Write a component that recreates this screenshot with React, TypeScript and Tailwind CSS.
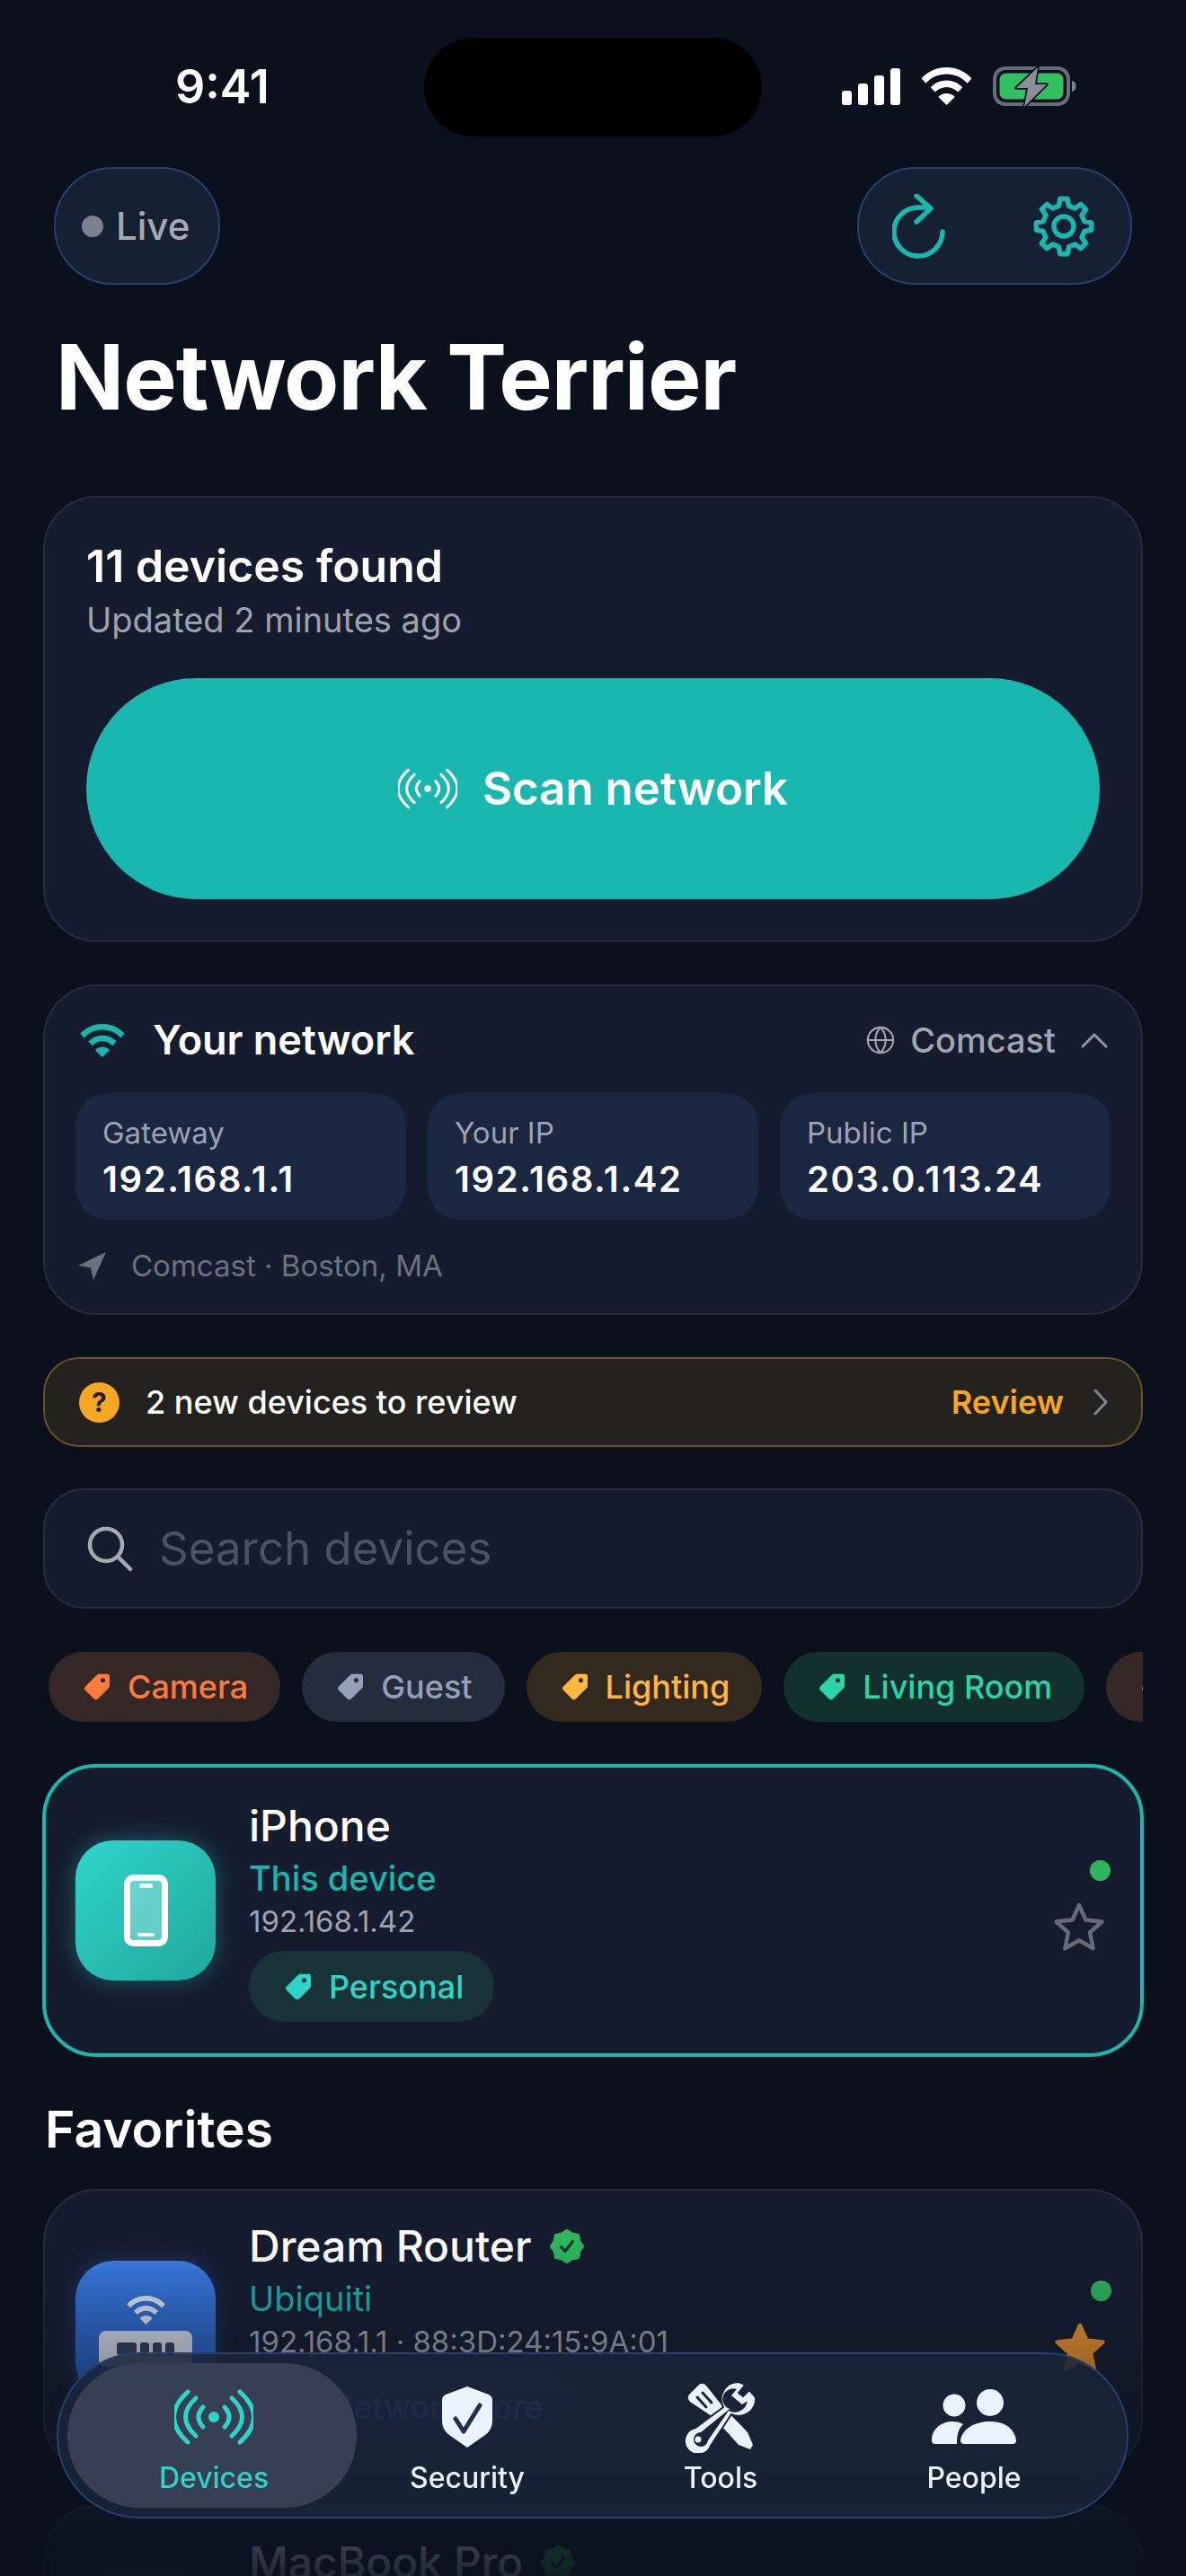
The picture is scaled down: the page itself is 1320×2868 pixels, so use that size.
import React from "react";
import { Globe } from "lucide-react";

function gearPath(cx: number, cy: number) {
  const pts: string[] = [];
  const teeth = 8;
  const R = 31;
  const r = 23.5;
  for (let i = 0; i < teeth; i++) {
    const a = (i / teeth) * Math.PI * 2 - Math.PI / 2;
    const w = (Math.PI * 2) / teeth;
    const list: [number, number][] = [
      [r, a - w * 0.3],
      [R, a - w * 0.17],
      [R, a + w * 0.17],
      [r, a + w * 0.3],
    ];
    list.forEach(([rad, an]) => pts.push(`${(cx + rad * Math.cos(an)).toFixed(1)} ${(cy + rad * Math.sin(an)).toFixed(1)}`));
  }
  return "M" + pts.join(" L") + " Z";
}

function Tag({ color, size = 36 }: { color: string; size?: number }) {
  return (
    <svg width={size} height={size} viewBox="0 0 24 24" className="shrink-0">
      <path
        fill={color}
        fillRule="evenodd"
        d="M13 2.5h7.5a1.5 1.5 0 0 1 1.5 1.5v7.5a2 2 0 0 1-.6 1.4l-8 8a2.2 2.2 0 0 1-3.1 0l-6.2-6.2a2.2 2.2 0 0 1 0-3.1l8-8a2 2 0 0 1 1.4-.6Zm4 3a1.7 1.7 0 1 0 0 3.4 1.7 1.7 0 0 0 0-3.4Z"
      />
    </svg>
  );
}

function WifiGlyph({ color, w = 57, h = 42, dark = false }: { color: string; w?: number; h?: number; dark?: boolean }) {
  return (
    <svg width={w} height={h} viewBox="0 0 57 42" className="shrink-0">
      <path fill={color} d="M28.5 0C17.5 0 8 4.4.5 12.3l5 5.4C11.5 11 19.5 7.5 28.5 7.5S45.5 11 51.5 17.7l5-5.4C49 4.4 39.5 0 28.5 0Z" />
      <path fill={color} d="M28.5 14.5c-7 0-13 2.8-17.7 7.7l5 5.4c3.3-3.6 7.8-5.7 12.7-5.7s9.4 2.1 12.7 5.7l5-5.4c-4.700-4.900-10.700-7.700-17.700-7.700Z" />
      <path fill={color} d="M28.500 29c-3.500 0-6.800 1.400-9.200 3.900l9.200 9.100 9.200-9.100C35.300 30.400 32 29 28.500 29Z" />
    </svg>
  );
}

function Radio({ color, w, h, sw, dot }: { color: string; w: number; h: number; sw: number; dot: number }) {
  return (
    <svg width={w} height={h} viewBox="0 0 88 62" fill="none" stroke={color} strokeWidth={sw} strokeLinecap="round" className="shrink-0">
      <circle cx="44" cy="31" r={dot} fill={color} stroke="none" />
      <path d="M56 20Q66 31 56 42" />
      <path d="M64 10Q87 31 64 52" />
      <path d="M73 3Q104 31 73 59" />
      <path d="M32 20Q22 31 32 42" />
      <path d="M24 10Q1 31 24 52" />
      <path d="M15 3Q-16 31 15 59" />
    </svg>
  );
}

function Star({ filled }: { filled: boolean }) {
  return (
    <svg width="58" height="56" viewBox="0 0 58 56" className="shrink-0">
      <path
        d="M29 4l7.400 16.600 18 1.900-13.400 12.100 3.700 17.700L29 43.300 13.300 52.300 17 34.600 3.600 22.500l18-1.900Z"
        fill={filled ? "#f0932b" : "none"}
        stroke={filled ? "#f0932b" : "#656b79"}
        strokeWidth="4.500"
        strokeLinejoin="round"
      />
    </svg>
  );
}

function Badge({ size = 38, color = "#2fb65d" }: { size?: number; color?: string }) {
  const pts: string[] = [];
  for (let i = 0; i < 16; i++) {
    const a = (i / 16) * Math.PI * 2;
    const r = i % 2 === 0 ? 19 : 16;
    pts.push(`${(19 + r * Math.cos(a)).toFixed(1)},${(19 + r * Math.sin(a)).toFixed(1)}`);
  }
  return (
    <svg width={size} height={size} viewBox="0 0 38 38" className="shrink-0">
      <polygon points={pts.join(" ")} fill={color} strokeLinejoin="round" stroke={color} strokeWidth="1" />
      <path d="M12.500 19.500l4.500 5 8.500-11" fill="none" stroke="#10301f" strokeWidth="3" strokeLinecap="round" strokeLinejoin="round" />
    </svg>
  );
}

function Chip({ label, bg, color, iconColor }: { label: string; bg: string; color: string; iconColor?: string }) {
  return null;
}

function FilterChip({ label, className, color }: { label: string; className: string; color: string }) {
  return (
    <div className={`flex h-[78px] shrink-0 items-center gap-[17px] rounded-full pl-[35px] pr-[36px] text-[36px] font-medium ${className}`}>
      <Tag color={color} />
      <span>{label}</span>
    </div>
  );
}

function DeviceCard({
  name,
  sub,
  meta,
  tile,
  chip,
  chipClass,
  chipColor,
  filled,
  verified,
  highlight,
}: {
  name: string;
  sub: string;
  meta: string;
  tile: React.ReactNode;
  chip: string;
  chipClass: string;
  chipColor: string;
  filled: boolean;
  verified?: boolean;
  highlight?: boolean;
}) {
  return (
    <div
      className={`flex items-center rounded-[60px] bg-[#151c2e] ${
        highlight ? "-mx-[1px] h-[326px] border-[4px] border-[#1ab7ae] pl-[33px] pr-[33px]" : "h-[316px] border-2 border-[#252d3d] pl-[34px] pr-[33px]"
      }`}
    >
      {tile}
      <div className="ml-[37px] flex min-w-0 flex-1 flex-col">
        <div className="flex items-center gap-[20px]">
          <span className="text-[48px] leading-[60px] font-medium text-white">{name}</span>
          {verified && <Badge />}
        </div>
        <span className={`mt-[3px] text-[38px] leading-[50px] text-[#1ab7ae] ${highlight ? "font-medium" : "font-normal"}`}>{sub}</span>
        <span className="text-[33px] leading-[46px] text-[#9ca3af]">{meta}</span>
        <div className={`mt-[10px] flex h-[79px] w-fit items-center gap-[17px] rounded-full pl-[36px] pr-[34px] text-[36px] font-medium ${chipClass}`}>
          <Tag color={chipColor} />
          <span>{chip}</span>
        </div>
      </div>
      <div className="flex flex-col items-end gap-[23px] self-center pb-[10px]">
        <div className="h-[23px] w-[23px] rounded-full bg-[#2fb65d]" />
        <div className="mr-[6px]">
          <Star filled={filled} />
        </div>
      </div>
    </div>
  );
}

function PhoneTile() {
  return (
    <div className="flex h-[156px] w-[156px] shrink-0 items-center justify-center rounded-[42px] bg-gradient-to-br from-[#2fd6ca] to-[#21a79e] shadow-[0_0_24px_rgba(45,212,200,0.35)]">
      <svg width="49" height="80" viewBox="0 0 49 80">
        <rect x="3.500" y="3.500" width="42" height="73" rx="7" fill="#ffffff" fillOpacity="0.28" stroke="#ffffff" strokeWidth="7" />
        <rect x="17" y="10" width="15" height="5" rx="2" fill="#ffffff" />
        <rect x="15" y="65" width="19" height="4" rx="2" fill="#ffffff" />
      </svg>
    </div>
  );
}

function RouterTile() {
  return (
    <div className="flex h-[156px] w-[156px] shrink-0 flex-col items-center justify-center gap-[7px] rounded-[42px] bg-gradient-to-b from-[#3a7de6] to-[#2457b0] shadow-[0_0_24px_rgba(59,125,230,0.3)]">
      <WifiGlyph color="#dfe7f3" w={47} h={32} />
      <div className="flex h-[40px] w-[104px] items-center justify-center gap-[4px] rounded-[8px] bg-[#d5dbe6]">
        <div className="h-[14px] w-[22px] rounded-[3px] bg-[#33415c]" />
        <div className="h-[14px] w-[10px] rounded-[3px] bg-[#33415c]" />
        <div className="h-[14px] w-[10px] rounded-[3px] bg-[#33415c]" />
        <div className="h-[14px] w-[10px] rounded-[3px] bg-[#33415c]" />
      </div>
    </div>
  );
}

function Stat({ label, value }: { label: string; value: string }) {
  return (
    <div className="flex h-[141px] flex-col justify-center rounded-[36px] bg-[#1b2740] pl-[30px]">
      <span className="text-[33px] leading-[44px] text-[#9ca3af]">{label}</span>
      <span className="mt-[6px] text-[40px] leading-[48px] font-semibold tracking-[0.04em] text-white">{value}</span>
    </div>
  );
}

function ToolsIcon() {
  return (
    <svg width="80" height="80" viewBox="0 0 80 80" fill="none">
      <path d="M5 15 L16 4 Q20 1 24 5 L43 29 L70 57 L76 71 L73 76 L60 71 L33 41 L6 23 Q2 19 5 15Z" fill="#eaf3fd" />
      <path d="M14 18 L24 29 M20 13 L30 24" stroke="#1a2438" strokeWidth="3" strokeLinecap="round" />
      <path
        d="M58 1 A19 19 0 0 0 43 29 L12 52 A15 15 0 1 0 29 72 L52 37 A19 19 0 0 0 79 18 L72 10 L65 17 L60 13 L67 5 Q64 1 58 1Z"
        fill="#eaf3fd"
        stroke="#1a2438"
        strokeWidth="2"
      />
      <path d="M58 9 A11 11 0 0 0 50 31 L18 57 A8 8 0 1 0 26 66 L49 33 Q60 38 68 28 L70 22 L64 26 L52 16 Z" fill="#1a2438" />
      <circle cx="15" cy="65" r="3.500" fill="#eaf3fd" />
    </svg>
  );
}

function NavItem({ label, active, icon }: { label: string; active?: boolean; icon: React.ReactNode }) {
  return (
    <div className="relative flex w-[282px] flex-col items-center">
      <div className="flex h-[80px] items-center justify-center">{icon}</div>
      <span className={`mt-[8px] text-[32px] leading-[40px] font-medium ${active ? "text-[#2dd4c8]" : "text-[#eaf3fd]"}`}>{label}</span>
    </div>
  );
}

export default function App() {
  return (
    <div className="relative h-[2868px] w-[1320px] overflow-hidden bg-[#0a111d] font-['Inter',sans-serif] text-white">
      {/* island */}
      <div className="absolute left-[472px] top-[42px] h-[110px] w-[376px] rounded-[55px] bg-black" />

      {/* status bar */}
      <div className="flex h-[186px] items-start justify-between pt-[70px] pl-[195px] pr-[122px]">
        <span className="text-[52px] leading-[54px] font-semibold">9:41</span>
        <div className="flex items-start gap-[23px] pt-[5px]">
          <svg width="65" height="41" viewBox="0 0 65 41" className="mt-[1px]">
            <rect x="0" y="25" width="11" height="16" rx="3" fill="#fff" />
            <rect x="18" y="17" width="11" height="24" rx="3" fill="#fff" />
            <rect x="36" y="8" width="11" height="33" rx="3" fill="#fff" />
            <rect x="54" y="0" width="11" height="41" rx="3" fill="#fff" />
          </svg>
          <WifiGlyph color="#ffffff" />
          <svg width="93" height="46" viewBox="0 0 93 46" className="-mt-[1px]">
            <rect x="2" y="2" width="82" height="40" rx="12" fill="none" stroke="#686c79" strokeWidth="4" />
            <rect x="7.500" y="7.500" width="71" height="29" rx="7" fill="#33c15f" />
            <path d="M88 16c3 .5 4.500 3 4.500 6s-1.500 5.500-4.500 6Z" fill="#7e818c" />
            <path d="M50 1 L26 24 H39 L35 45 L60 20 H47 Z" fill="#8b8e99" stroke="#0a111d" strokeWidth="3.500" strokeLinejoin="round" paintOrder="stroke" />
          </svg>
        </div>
      </div>

      {/* top controls */}
      <div className="flex items-center justify-between px-[60px]">
        <div className="flex h-[131px] w-[185px] items-center gap-[14px] rounded-[65px] border-2 border-[#27406f] bg-[#162033] pl-[29px]">
          <div className="h-[24px] w-[24px] rounded-full bg-[#7d818d]" />
          <span className="text-[42px] font-medium text-[#a6a9b2]">Live</span>
        </div>
        <div className="flex h-[131px] w-[306px] items-center justify-between rounded-[65px] border-2 border-[#27406f] bg-[#162033] pl-[37px] pr-[38px]">
          <svg width="60" height="72" viewBox="0 0 60 72" fill="none" stroke="#1ab7ae" strokeWidth="5.500" strokeLinecap="round" strokeLinejoin="round">
            <path d="M56 42 A27 27 0 1 1 29 15 L40 15" />
            <path d="M27 2 L43 16 L27 31" />
          </svg>
          <svg width="72" height="72" viewBox="0 0 72 72" fill="none" stroke="#1ab7ae" strokeWidth="5.500" strokeLinejoin="round">
            <path d={gearPath(36, 36)} />
            <circle cx="36" cy="36" r="11" />
          </svg>
        </div>
      </div>

      {/* title */}
      <h1 className="mt-[52px] ml-[62px] text-[100px] leading-[102px] font-bold tracking-[-0.01em] text-white">Network Terrier</h1>

      <div className="mt-[81px] flex flex-col px-[48px]">
        {/* scan card */}
        <div className="rounded-[60px] border-2 border-[#252d3d] bg-[#151c2e] px-[46px] pt-[46px] pb-[46px]">
          <div className="text-[50px] leading-[60px] font-semibold text-white">11 devices found</div>
          <div className="mt-[6px] text-[38px] leading-[48px] text-[#9ca3af]">Updated 2 minutes ago</div>
          <div className="mt-[41px] flex h-[246px] items-center justify-center gap-[28px] rounded-full bg-[#1ab7ae]">
            <Radio color="#ffffff" w={66} h={46} sw={4} dot={5} />
            <span className="text-[51px] font-semibold text-white">Scan network</span>
          </div>
        </div>

        {/* network card */}
        <div className="mt-[47px] h-[368px] rounded-[60px] border-2 border-[#252d3d] bg-[#151c2e] px-[34px] pt-[30px]">
          <div className="flex h-[60px] items-center pl-[4px] pr-[3px]">
            <WifiGlyph color="#1ab7ae" w={52} h={37} />
            <span className="ml-[30px] text-[45px] font-semibold text-white">Your network</span>
            <div className="flex-1" />
            <Globe size={34} color="#a0a5af" strokeWidth={1.5} />
            <span className="ml-[16px] text-[38px] font-medium text-[#a0a5af]">Comcast</span>
            <svg width="30" height="18" viewBox="0 0 30 18" fill="none" stroke="#8f95a0" strokeWidth="3" strokeLinecap="round" strokeLinejoin="round" className="ml-[28px]">
              <path d="M2 16 L15 3 L28 16" />
            </svg>
          </div>
          <div className="mt-[29px] grid grid-cols-3 gap-[24px]">
            <Stat label="Gateway" value="192.168.1.1" />
            <Stat label="Your IP" value="192.168.1.42" />
            <Stat label="Public IP" value="203.0.113.24" />
          </div>
          <div className="mt-[30px] flex items-center pl-[3px]">
            <svg width="31" height="31" viewBox="0 0 31 31">
              <path d="M31 0 L0 15 L14 17.500 L17 31 Z" fill="#6b7280" />
            </svg>
            <span className="ml-[28px] text-[33px] leading-[42px] text-[#6b7280]">Comcast · Boston, MA</span>
          </div>
        </div>

        {/* review banner */}
        <div className="mt-[47px] flex h-[100px] items-center rounded-[40px] border-2 border-[#6a4f27] bg-[#23221f] pl-[38px] pr-[36px]">
          <div className="flex h-[45px] w-[45px] items-center justify-center rounded-full bg-[#f5a623] text-[30px] font-bold text-[#23221f]">?</div>
          <span className="ml-[29px] text-[36px] font-medium text-white">2 new devices to review</span>
          <div className="flex-1" />
          <span className="text-[36px] font-semibold text-[#f5a623]">Review</span>
          <svg width="18" height="30" viewBox="0 0 18 30" fill="none" stroke="#7e8593" strokeWidth="3" strokeLinecap="round" strokeLinejoin="round" className="ml-[32px]">
            <path d="M3 2 L15 15 L3 28" />
          </svg>
        </div>

        {/* search */}
        <div className="mt-[46px] flex h-[134px] items-center rounded-[45px] border-2 border-[#252d3d] bg-[#151c2e] pl-[46px]">
          <svg width="52" height="52" viewBox="0 0 52 52" fill="none" stroke="#a6a9b2" strokeWidth="4.500" strokeLinecap="round">
            <circle cx="22" cy="22" r="18" />
            <path d="M35 35 L49 49" />
          </svg>
          <span className="ml-[29px] text-[51px] text-[#4b5363]">Search devices</span>
        </div>

        {/* chips */}
        <div className="mt-[48px] flex gap-[24px] overflow-hidden pl-[6px]">
          <FilterChip label="Camera" className="bg-[#352824] text-[#ff7a3d]" color="#ff7a3d" />
          <FilterChip label="Guest" className="bg-[#242d3e] text-[#94a0b8]" color="#94a0b8" />
          <FilterChip label="Lighting" className="bg-[#33291f] text-[#ffb83d]" color="#ffb83d" />
          <FilterChip label="Living Room" className="bg-[#12302e] text-[#2dd4a7]" color="#2dd4a7" />
          <FilterChip label="Media" className="bg-[#352824] text-[#ff7a3d]" color="#ff7a3d" />
        </div>

        {/* this device */}
        <div className="mt-[47px]">
          <DeviceCard
            highlight
            name="iPhone"
            sub="This device"
            meta="192.168.1.42"
            tile={<PhoneTile />}
            chip="Personal"
            chipClass="bg-[#173338] text-[#2dd4c8]"
            chipColor="#2dd4c8"
            filled={false}
          />
        </div>

        <h2 className="mt-[48px] ml-[2px] text-[57px] leading-[66px] font-semibold text-white">Favorites</h2>

        <div className="mt-[33px] flex flex-col gap-[36px]">
          <DeviceCard
            verified
            name="Dream Router"
            sub="Ubiquiti"
            meta="192.168.1.1  ·  88:3D:24:15:9A:01"
            tile={<RouterTile />}
            chip="Network Core"
            chipClass="bg-[#1b2c52] text-[#3b82f6]"
            chipColor="#3b82f6"
            filled
          />
          <DeviceCard
            verified
            name="MacBook Pro"
            sub="Apple"
            meta="192.168.1.24"
            tile={<PhoneTile />}
            chip="Personal"
            chipClass="bg-[#173338] text-[#2dd4c8]"
            chipColor="#2dd4c8"
            filled
          />
        </div>
      </div>

      {/* bottom fade */}
      <div className="pointer-events-none absolute inset-x-0 bottom-0 h-[380px] bg-gradient-to-b from-[#0a111d]/0 to-[#0a111d]/90" />

      {/* tab bar */}
      <div className="absolute bottom-[64px] left-[63px] h-[185px] w-[1193px] overflow-hidden rounded-[92px] border-2 border-[#27406f] bg-[#1a2438]/85 pl-[32px] pt-[30px]">
        <div className="absolute left-[10px] top-[10px] h-[161px] w-[322px] rounded-[80px] bg-[#3a4358]/90 backdrop-blur-md" />
        <div className="relative flex">
          <NavItem label="Devices" active icon={<Radio color="#2dd4c8" w={88} h={62} sw={5} dot={6} />} />
          <NavItem
            label="Security"
            icon={
              <svg width="56" height="68" viewBox="0 0 56 68">
                <path d="M28 0 L52 9 Q56 11 56 15 V38 Q56 48 48 54 L28 68 L8 54 Q0 48 0 38 V15 Q0 11 4 9 Z" fill="#eaf3fd" />
                <path d="M15 36 L24 50 L42 21" fill="none" stroke="#1f2e4d" strokeWidth="5" strokeLinecap="round" strokeLinejoin="round" />
              </svg>
            }
          />
          <NavItem label="Tools" icon={<ToolsIcon />} />
          <NavItem
            label="People"
            icon={
              <svg width="94" height="62" viewBox="0 0 94 62">
                <circle cx="25" cy="18" r="12.500" fill="#eaf3fd" />
                <circle cx="65" cy="15" r="15" fill="#eaf3fd" />
                <path d="M0 57 C0 44 11 36 23 36 C28 36 32 37 35 39 C30 44 28 50 28 61 H4 Q0 61 0 57Z" fill="#eaf3fd" />
                <path d="M36 61 Q32 61 32 57 C34 44 48 36 65 36 C82 36 92 44 94 57 Q94 61 90 61 Z" fill="#eaf3fd" />
              </svg>
            }
          />
        </div>
      </div>
    </div>
  );
}
